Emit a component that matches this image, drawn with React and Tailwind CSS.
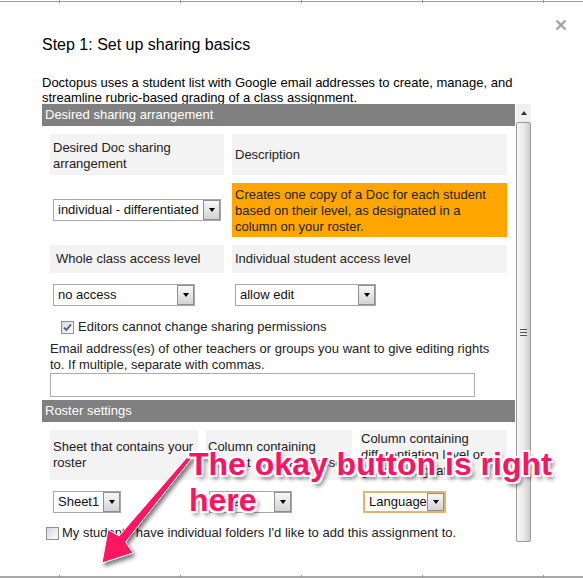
import React from "react";

function DropButton() {
  return (
    <div className="flex h-full w-[17px] shrink-0 items-center justify-center border border-[#8f8f8f] bg-linear-to-b from-[#f8f8f8] to-[#d3d3d3]">
      <span className="h-0 w-0 border-x-[3.5px] border-t-[4px] border-x-transparent border-t-black" />
    </div>
  );
}

function Select({ value, className = "", focused = false }) {
  return (
    <div
      className={`flex h-[22px] items-stretch bg-white ${
        focused ? "border-2 border-[#e1b56b]" : "border border-[#a6a6a6]"
      } ${className}`}
    >
      <span className="flex flex-1 items-center overflow-hidden whitespace-nowrap pl-[4px] text-[13px] leading-[16px] text-[#111]">
        {value}
      </span>
      <DropButton />
    </div>
  );
}

function Check({ checked }) {
  return (
    <span className="flex h-[13px] w-[13px] shrink-0 items-center justify-center border border-[#8e8f8f] bg-linear-to-br from-[#d8d8d8] to-[#fcfcfc]">
      {checked && (
        <svg width="9" height="9" viewBox="0 0 9 9">
          <path d="M1 4.6 L3.4 7 L8 1.4" stroke="#4a5a8e" strokeWidth="1.8" fill="none" />
        </svg>
      )}
    </span>
  );
}

// spreadsheet grid line peeking out at top and bottom
function GridEdge({ bottom }) {
  const cols = [60, 121, 121, 121, 121, 39];
  return (
    <div className="flex h-[3px]">
      {cols.map((w, i) => (
        <div
          key={i}
          style={{ width: w }}
          className={`flex h-[3px] flex-col ${i < cols.length - 1 ? "border-r border-[#9a9a9a]" : ""}`}
        >
          {bottom ? <div className="mt-auto h-[2px] bg-[#a8a8a8]" /> : <div className="mt-px h-px bg-[#a0a0a0]" />}
        </div>
      ))}
    </div>
  );
}

export default function App() {
  return (
    <div className="relative flex h-[578px] w-[583px] flex-col overflow-hidden bg-white font-['Liberation_Sans',Arial,sans-serif] text-[#222]">
      <GridEdge />

      <div className="flex flex-1 flex-col pl-[42px]">
        {/* title + close */}
        <div className="flex items-start justify-between pr-[16px]">
          <h1 className="mt-[33px] text-[16px] leading-[18px] text-black">Step 1: Set up sharing basics</h1>
          <svg className="mt-[16px]" width="12" height="12" viewBox="0 0 12 12">
            <path d="M1.5 1.5 L10.5 10.5 M10.5 1.5 L1.5 10.5" stroke="#a3a3a3" strokeWidth="2.4" />
          </svg>
        </div>

        <p className="mt-[21px] h-[29px] w-[489px] text-[13px] leading-[15px] text-black">
          Doctopus uses a student list with Google email addresses to create, manage, and
          <br />
          streamline rubric-based grading of a class assignment.
        </p>

        {/* scrolling panel */}
        <div className="flex h-[438px] overflow-hidden">
          <div className="w-[473px] text-[13px] leading-[16px]">
            <div className="flex h-[22px] items-center bg-[#808080] pl-[3px] text-white">Desired sharing arrangement</div>

            <div className="grid grid-cols-[174px_275px] gap-2 p-2">
              <div className="flex h-[41px] items-center bg-[#f3f3f3] pl-[3px] pt-[2px]">
                Desired Doc sharing
                <br />
                arrangement
              </div>
              <div className="flex h-[41px] items-center bg-[#f3f3f3] pl-[3px]">Description</div>

              <div className="flex h-[54px] items-center pl-[3px]">
                <Select value="individual - differentiated" className="w-[168px]" />
              </div>
              <div className="flex h-[54px] items-center bg-[#ffa500] pl-[3px] pt-px">
                <span>
                  Creates one copy of a Doc for each student
                  <br />
                  based on their level, as designated in a
                  <br />
                  column on your roster.
                </span>
              </div>

              <div className="flex h-[28px] items-center bg-[#f3f3f3] pl-[6px]">Whole class access level</div>
              <div className="flex h-[28px] items-center bg-[#f3f3f3] pl-[3px]">Individual student access level</div>

              <div className="h-[28px] pl-[3px] pt-[3px]">
                <Select value="no access" className="w-[142px]" />
              </div>
              <div className="h-[28px] pl-[3px] pt-[3px]">
                <Select value="allow edit" className="w-[141px]" />
              </div>
            </div>

            <label className="mt-[2px] flex h-[16px] items-center gap-[4px] pl-[19px]">
              <Check checked />
              <span>Editors cannot change sharing permissions</span>
            </label>

            <div className="mt-[6px] pl-[8px]">
              Email address(es) of other teachers or groups you want to give editing rights
              <br />
              to. If multiple, separate with commas.
            </div>
            <div className="ml-[8px] h-[24px] w-[425px] border border-[#ababab] bg-white" />

            <div className="mt-[3px] flex h-[22px] items-center bg-[#808080] pl-[3px] text-white">Roster settings</div>

            <div className="grid grid-cols-[148px_146px_147px] gap-2 p-2">
              <div className="flex h-[50px] items-center bg-[#f3f3f3] pl-[3px]">
                <span>
                  Sheet that contains your
                  <br />
                  roster
                </span>
              </div>
              <div className="flex h-[50px] items-center bg-[#f3f3f3] pl-[2px]">
                <span>
                  Column containing
                  <br />
                  student email addresses
                </span>
              </div>
              <div className="flex h-[50px] items-center bg-[#f3f3f3] pl-px">
                <span>
                  Column containing
                  <br />
                  differentiation level or
                  <br />
                  group designation
                </span>
              </div>

              <div className="h-[28px] pl-[3px] pt-[3px]">
                <Select value="Sheet1" className="w-[68px]" />
              </div>
              <div className="h-[28px] pl-[3px] pt-[3px]">
                <Select value="Email" className="w-[83px]" />
              </div>
              <div className="h-[28px] pl-[3px] pt-[3px]">
                <Select value="Language" className="w-[83px]" focused />
              </div>
            </div>

            <label className="mt-px flex h-[16px] items-center gap-[3px] pl-[4px]">
              <Check />
              <span>My students have individual folders I'd like to add this assignment to.</span>
            </label>
          </div>

          {/* scrollbar */}
          <div className="ml-px flex w-[15px] flex-col bg-[#f0f0f0]">
            <div className="flex h-[18px] items-center justify-center">
              <span className="h-0 w-0 border-x-[3.5px] border-b-[4px] border-x-transparent border-b-[#333]" />
            </div>
            <div className="flex flex-1 items-center justify-center rounded-[2px] border border-[#9a9a9a] bg-linear-to-r from-[#f7f7f7] via-[#ebebeb] to-[#cdcdcd]">
              <div className="flex flex-col gap-[2px]">
                <span className="h-px w-[7px] bg-[#555]" />
                <span className="h-px w-[7px] bg-[#555]" />
                <span className="h-px w-[7px] bg-[#555]" />
              </div>
            </div>
          </div>
        </div>
      </div>

      <GridEdge bottom />

      {/* annotation arrow */}
      <svg className="pointer-events-none absolute left-0 top-0" width="583" height="578" viewBox="0 0 583 578">
        <defs>
          <filter id="sh" x="-20%" y="-20%" width="150%" height="150%">
            <feDropShadow dx="2" dy="3" stdDeviation="2" floodColor="#000" floodOpacity="0.55" />
          </filter>
        </defs>
        <path
          d="M191.5 458.5 L125.5 542 L133 553 L102 563 L108 529.5 L119 536 L188.5 455.5 Z"
          fill="#ff1361"
          stroke="#fff"
          strokeWidth="1"
          filter="url(#sh)"
        />
      </svg>

      {/* annotation text */}
      <div className="pointer-events-none absolute left-[189px] top-[446px] w-[394px] text-[32px] font-bold leading-[36px] text-[#ff1361] [text-shadow:-2px_-2px_0_#fff,2px_-2px_0_#fff,-2px_2px_0_#fff,2px_2px_0_#fff,0_-2px_0_#fff,0_2px_0_#fff,-2px_0_0_#fff,2px_0_0_#fff,3px_4px_4px_rgba(0,0,0,0.55)]">
        The okay button is right
        <br />
        here
      </div>
    </div>
  );
}
